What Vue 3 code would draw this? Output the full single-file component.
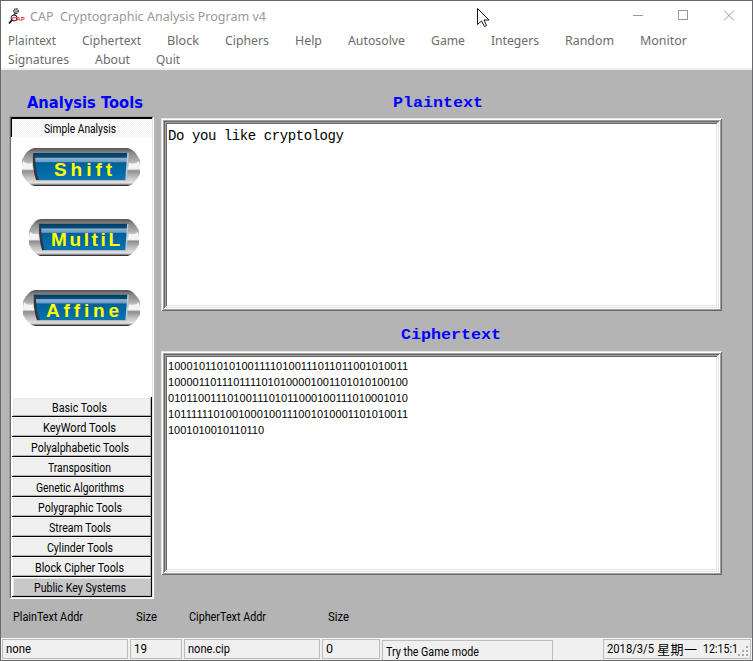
<script setup>
// Fits the text of an element to a given width: by letter spacing,
// or with the "scale" modifier by the width of the glyphs.
const vFit = {
  mounted(el, { value, modifiers }) {
    const natural = el.getBoundingClientRect().width
    if (modifiers.scale) {
      el.style.transform = `scaleX(${value / natural})`
      el.style.marginRight = value - natural + 'px'
      return
    }
    const gaps = el.textContent.length - 1
    const spacing = gaps > 0 ? (value - natural) / gaps : 0
    el.style.letterSpacing = spacing + 'px'
    el.style.marginRight = -spacing + 'px'
  },
}

const title = 'CAP\u00a0\u00a0Cryptographic Analysis Program v4'
const menuRows = [
  [['Plaintext', 48], ['Ciphertext', 59], ['Block', 32], ['Ciphers', 44], ['Help', 27], ['Autosolve', 57], ['Game', 34], ['Integers', 48], ['Random', 49], ['Monitor', 47]],
  [['Signatures', 61], ['About', 35], ['Quit', 24]],
]
const methods = [
  { name: 'Shift', width: 58, kind: 'shift' },
  { name: 'MultiL', width: 69, kind: 'multi' },
  { name: 'Affine', width: 73, kind: 'affine' },
]
const tools = [
  ['Basic Tools', 55], ['KeyWord Tools', 73], ['Polyalphabetic Tools', 98], ['Transposition', 63],
  ['Genetic Algorithms', 88], ['Polygraphic Tools', 84], ['Stream Tools', 62], ['Cylinder Tools', 66],
  ['Block Cipher Tools', 89], ['Public Key Systems', 92],
]
const cipherLines = [
  ['1000101101010011110100111011011001010011', 240],
  ['1000011011101111010100001001101010100100', 240],
  ['0101100111010011101011000100111010001010', 240],
  ['1011111101001000100111001010001101010011', 240],
  ['1001010010110110', 96],
]
</script>

<template>
  <div class="window">
    <header class="titlebar">
      <svg class="logo" width="17" height="17" viewBox="0 0 17 17">
        <circle cx="8" cy="3" r="2.3" fill="#aaa" stroke="#333" stroke-width="1.2" stroke-dasharray="1.3 .7" />
        <path d="M8 5L5 8M6 7l3 2" stroke="#444" stroke-width="1.6" />
        <circle cx="6" cy="10" r="3" fill="#eee" stroke="#222" />
        <path d="M4 12L1 15.5" stroke="#111" stroke-width="1.7" />
        <text x="4" y="12.500" font-family="Liberation Sans" font-size="6" font-weight="bold" fill="#f02828">CAP</text>
      </svg>
      <span v-fit.scale="236" class="title">{{ title }}</span>
      <svg class="controls" width="102" height="12" viewBox="0 0 102 12" fill="none" stroke="#999">
        <path d="M0 5.5H10" />
        <rect x="45.500" y=".5" width="9" height="9" />
        <path d="M91 .5l10 10M101 .5l-10 10" />
      </svg>
      <svg class="cursor" width="13" height="20" viewBox="0 0 13 20">
        <path d="M.5.5V16.500L4.500 13L7.500 18.500L9.500 17.500L7 12H12Z" fill="#fff" stroke="#111122" />
      </svg>
    </header>
    <nav class="menu">
      <div v-for="(row, i) in menuRows" :key="i" class="menu-row">
        <span v-for="[label, width] in row" :key="label" v-fit.scale="width" class="menu-item">{{ label }}</span>
      </div>
    </nav>

    <main class="client">
      <section class="side">
        <h2 class="tools-heading"><span v-fit.scale="116">Analysis Tools</span></h2>
        <div class="toolbox">
          <div class="tab-open"><span v-fit.scale="72">Simple Analysis</span></div>
          <div class="methods">
            <div v-for="m in methods" :key="m.name" class="method" :class="m.kind">
              <svg class="pill" viewBox="0 0 118 38" preserveAspectRatio="none">
                <defs>
                  <linearGradient id="chrome" x1="0" y1="0" x2="0" y2="1">
                    <stop offset="0" stop-color="#555" />
                    <stop offset=".12" stop-color="#858585" />
                    <stop offset=".34" stop-color="#b0aeb0" />
                    <stop offset=".55" stop-color="#f4f4f4" />
                    <stop offset=".6" stop-color="#8f8d8f" />
                    <stop offset=".78" stop-color="#c4c0c4" />
                    <stop offset=".92" stop-color="#e4e2e4" />
                    <stop offset="1" stop-color="#333" />
                  </linearGradient>
                  <linearGradient id="glass" x1="0" y1="0" x2="0" y2="1">
                    <stop offset="0" stop-color="#003c63" />
                    <stop offset=".16" stop-color="#074d7b" />
                    <stop offset=".19" stop-color="#91b2ce" />
                    <stop offset=".32" stop-color="#6d9cc1" />
                    <stop offset=".36" stop-color="#00609c" />
                    <stop offset="1" stop-color="#0873b0" />
                  </linearGradient>
                </defs>
                <path d="M12 0H106Q112 1 118 12V26Q112 37 106 38H12Q5 36 0 26V12Q5 1 12 0Z" fill="url(#chrome)" />
                <path d="M1 13Q5 17 10 15V20Q4 22 0 20ZM107 15Q113 17 117 13L118 20Q112 22 107 20Z" fill="#f4f4f4" />
                <path d="M11 5H106L104 32H15Q11 22 11 5Z" fill="url(#glass)" />
                <path d="M11 5L13 5Q13 22 17 32H14Q10 20 11 5Z" fill="#303840" />
                <path d="M106 5L104 32" stroke="#b8c9d5" stroke-width="1.5" />
                <path d="M15 32.500H104" stroke="#b9c0c5" />
                <path d="M12 37.500H106" stroke="#333" />
              </svg>
              <span v-fit="m.width" class="method-name">{{ m.name }}</span>
            </div>
          </div>
          <button v-for="[label, width] in tools" :key="label" class="tool"><span v-fit.scale="width">{{ label }}</span></button>
        </div>
      </section>

      <section class="texts">
        <h2 class="text-heading first"><span v-fit.scale="90">Plaintext</span></h2>
        <div class="field plain"><span v-fit="176">Do you like cryptology</span></div>
        <h2 class="text-heading second"><span v-fit.scale="100">Ciphertext</span></h2>
        <div class="field cipher">
          <div v-for="[line, width] in cipherLines" :key="line" class="bits"><span v-fit="width">{{ line }}</span></div>
        </div>
      </section>
    </main>

    <div class="labels">
      <span v-fit.scale="70">PlainText Addr</span>
      <span v-fit.scale="21">Size</span>
      <span v-fit.scale="77">CipherText Addr</span>
      <span v-fit.scale="21">Size</span>
    </div>

    <footer class="status">
      <div class="cell"><span v-fit.scale="25">none</span></div>
      <div class="cell"><span v-fit.scale="13">19</span></div>
      <div class="cell"><span v-fit.scale="42">none.cip</span></div>
      <div class="cell"><span v-fit.scale="7">0</span></div>
      <div class="cell hint"><span v-fit.scale="93">Try the Game mode</span></div>
      <div class="cell clock">
        <span v-fit.scale="47">2018/3/5</span><span v-fit="40" class="day">星期一</span><span v-fit.scale="35">12:15:1</span>
        <svg class="grip" width="11" height="11" viewBox="0 0 11 11" fill="#a8a8a8">
          <path d="M8 0h2v2h-2zM8 4h2v2h-2zM8 8h2v2h-2zM4 4h2v2h-2zM4 8h2v2h-2zM0 8h2v2h-2z" />
        </svg>
      </div>
    </footer>
  </div>
</template>

<style>
body {
  margin: 0;
  overflow: hidden;
}
</style>

<style scoped>
.window {
  box-sizing: border-box;
  width: 753px;
  height: 661px;
  border: 1px solid #69696b;
  background: #b4b4b4;
  display: flex;
  flex-direction: column;
  font-family: Roboto, "Liberation Sans", "Noto Sans CJK SC", sans-serif;
  font-size: 12px;
  color: #000;
}
span {
  display: inline-block;
  white-space: pre;
  flex: none;
  transform-origin: left;
}
.titlebar {
  position: relative;
  height: 30px;
  flex: none;
  display: flex;
  align-items: center;
  padding: 0 17px 0 7px;
  background: #fff;
}
.title {
  margin-left: 5px;
  font: 13px/20px "Noto Sans", sans-serif;
  color: #999;
}
.controls {
  margin-left: auto;
}
.cursor {
  position: absolute;
  left: 476px;
  top: 7px;
}
.menu {
  height: 37px;
  flex: none;
  background: #fff;
  border-bottom: 2px solid #f0f0f0;
}
.menu-row {
  height: 19px;
  display: flex;
  gap: 26px;
  padding-left: 7px;
}
.menu-item {
  font: 13px/18px "Noto Sans", sans-serif;
  color: #6b6b6b;
}
.client {
  display: flex;
  height: 529px;
  flex: none;
}
.side {
  width: 145px;
  margin-left: 8px;
}
h2 {
  margin: 0;
  color: #0000ff;
}
.tools-heading {
  box-sizing: border-box;
  height: 46px;
  padding: 23px 0 0 18px;
  font: bold 15px/20px "DejaVu Sans", sans-serif;
}
.toolbox {
  box-sizing: border-box;
  height: 483px;
  padding: 1px 2px 2px 3px;
  background: #fff;
  box-shadow: inset 1px 1px #a0a0a0, inset -1px -1px #fff, inset 2px 2px #696969, inset -2px -2px #e3e3e3;
}
.tab-open {
  box-sizing: border-box;
  height: 20px;
  margin-left: -1px;
  border-top: 2px solid #000;
  border-left: 1px solid #000;
  background: repeating-conic-gradient(#fff 0 25%, #f0f0f0 0 50%) 0 0 / 2px 2px;
  display: flex;
  justify-content: center;
  align-items: center;
  padding: 2px 4px 0 0;
}
.methods {
  height: 260px;
  display: flow-root;
}
.method {
  position: relative;
  display: flex;
  align-items: center;
}
.shift { width: 118px; height: 38px; margin: 11px 0 0 10px; }
.multi { width: 110px; height: 37px; margin: 33px 0 0 17px; }
.affine { width: 117px; height: 36px; margin: 34px 0 0 11px; }
.pill {
  position: absolute;
  inset: 0;
  width: 100%;
  height: 100%;
}
.method-name {
  position: relative;
  margin-top: 5px;
  font: bold 19px/24px "Liberation Sans", sans-serif;
  color: #ffff00;
}
.shift .method-name { left: 32px; }
.multi .method-name { left: 22px; }
.affine .method-name { left: 23px; }
.tool {
  display: flex;
  justify-content: center;
  align-items: center;
  box-sizing: border-box;
  width: 140px;
  height: 20px;
  padding: 2px 5px 0 0;
  border: 0;
  background: #f0f0f0;
  box-shadow: inset -1px -1px #000, inset 1px 1px #fff, inset -2px -2px #b0b0b0, inset 2px 2px #e6e6e6;
  font: inherit;
  color: #000;
}
.tool:last-child {
  background: #c8c8c8;
}
.texts {
  width: 561px;
  margin-left: 7px;
}
.text-heading {
  box-sizing: border-box;
  font: bold 15px/20px "Liberation Mono", monospace;
}
.first {
  height: 48px;
  padding: 24px 0 0 232px;
}
.second {
  height: 40px;
  padding: 15px 0 0 240px;
}
.field {
  box-sizing: border-box;
  padding: 6px 7px;
  background: #fff;
  box-shadow:
    inset 1px 1px #e3e3e3, inset -1px -1px #696969,
    inset 2px 2px #fff, inset -2px -2px #a0a0a0,
    inset 3px 3px #a0a0a0, inset -3px -3px #fff,
    inset 4px 4px #696969, inset -4px -4px #e3e3e3,
    inset 5px 5px #a0a0a0, inset -5px -5px #fff,
    inset 6px 6px #696969, inset -6px -6px #e3e3e3;
}
.plain {
  height: 193px;
  font: 14px/24px "Liberation Mono", monospace;
}
.cipher {
  height: 224px;
  font: 11px/16px "Liberation Sans", sans-serif;
  padding-top: 7px;
}
.bits {
  height: 16px;
}
.labels {
  box-sizing: border-box;
  display: grid;
  grid-template-columns: 123px 53px 139px auto;
  justify-content: start;
  justify-items: start;
  align-items: center;
  height: 39px;
  flex: none;
  padding: 0 0 3px 12px;
}
.status {
  box-sizing: border-box;
  height: 22px;
  flex: none;
  display: grid;
  grid-template-columns: 126px 52px 136px 58px 171px 148px;
  column-gap: 2px;
  padding: 0 1px;
  background: #f0f0f0;
  border-top: 1px solid #f8f8f8;
}
.cell {
  box-sizing: border-box;
  height: 20px;
  display: flex;
  align-items: center;
  padding-left: 3px;
  border: 1px solid #bcbcbc;
}
.hint {
  margin-top: 1px;
  border-bottom: 0;
  padding-top: 2px;
}
.clock {
  position: relative;
  width: 148px;
  margin-left: 48px;
}
.day {
  margin-left: 3px;
  font: 13px/18px "Noto Sans CJK SC", sans-serif;
}
.day + span {
  margin-left: 6px;
}
.grip {
  position: absolute;
  right: 1px;
  bottom: 1px;
}
</style>
